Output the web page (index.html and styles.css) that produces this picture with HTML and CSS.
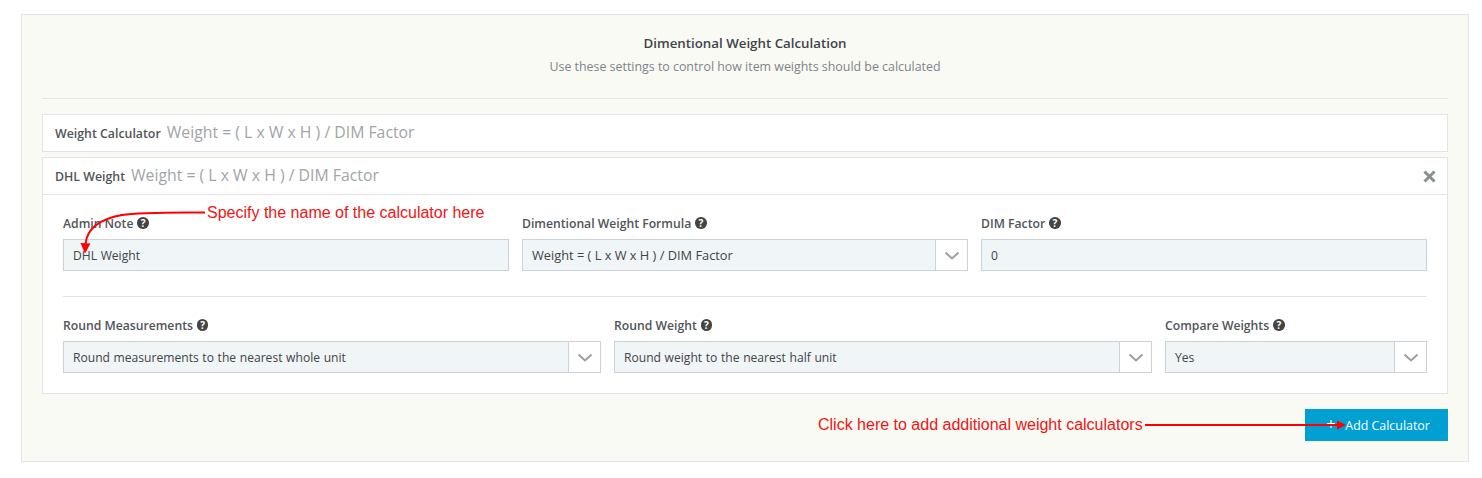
FILE: index.html
```html
<!DOCTYPE html>
<html lang="en">
<head>
  <meta charset="UTF-8">
  <title>Dimentional Weight Calculation</title>
  <link rel="stylesheet" href="styles.css">
</head>
<body>

<div class="panel">
  <div class="panel-head">
    <h3>Dimentional Weight Calculation</h3>
    <p>Use these settings to control how item weights should be calculated</p>
  </div>

  <!-- Collapsed calculator -->
  <div class="calc">
    <div class="calc-title">
      <strong>Weight Calculator</strong>
      <span>Weight = ( L x W x H ) / DIM Factor</span>
    </div>
  </div>

  <!-- Open calculator -->
  <div class="calc">
    <div class="calc-title calc-title-open">
      <strong>DHL Weight</strong>
      <span>Weight = ( L x W x H ) / DIM Factor</span>
      <svg class="close" width="13" height="13" viewBox="0 0 13 13"><path d="M1.500 1.500l10 10M11.500 1.500l-10 10"/></svg>
    </div>
    <div class="calc-body">
      <div class="row row-top">
        <div class="field">
          <label>Admin Note <i class="help">?</i></label>
          <div class="input">DHL Weight</div>
        </div>
        <div class="field">
          <label>Dimentional Weight Formula <i class="help">?</i></label>
          <div class="select">
            <div class="input input-formula">Weight = ( L x W x H ) / DIM Factor</div>
            <div class="arrow"><svg width="16" height="9" viewBox="0 0 16 9"><path d="M1.500 1.500L8 7.500l6.500-6"/></svg></div>
          </div>
        </div>
        <div class="field">
          <label>DIM Factor <i class="help">?</i></label>
          <div class="input">0</div>
        </div>
      </div>
      <div class="row row-bottom">
        <div class="field">
          <label>Round Measurements <i class="help">?</i></label>
          <div class="select">
            <div class="input">Round measurements to the nearest whole unit</div>
            <div class="arrow"><svg width="16" height="9" viewBox="0 0 16 9"><path d="M1.500 1.500L8 7.500l6.500-6"/></svg></div>
          </div>
        </div>
        <div class="field">
          <label>Round Weight <i class="help">?</i></label>
          <div class="select">
            <div class="input">Round weight to the nearest half unit</div>
            <div class="arrow"><svg width="16" height="9" viewBox="0 0 16 9"><path d="M1.500 1.500L8 7.500l6.500-6"/></svg></div>
          </div>
        </div>
        <div class="field">
          <label>Compare Weights <i class="help">?</i></label>
          <div class="select">
            <div class="input">Yes</div>
            <div class="arrow"><svg width="16" height="9" viewBox="0 0 16 9"><path d="M1.500 1.500L8 7.500l6.500-6"/></svg></div>
          </div>
        </div>
      </div>
    </div>
  </div>

  <div class="panel-foot">
    <button class="add-btn"><span class="plus">+</span>Add Calculator</button>
  </div>
</div>

<!-- Red notes drawn over the screenshot -->
<span class="note note-name">Specify the name of the calculator here</span>
<span class="note note-add">Click here to add additional weight calculators</span>
<svg class="marks" width="1482" height="478" viewBox="0 0 1482 478">
  <path class="mark-line" d="M205 212.500C170 212.500 140 212 122 215C100 219 87 228 85.500 244"/>
  <path class="mark-head" d="M80.500 243L90.500 243.500L85 253.500Z"/>
  <path class="mark-line" d="M1145 425H1338"/>
  <path class="mark-head" d="M1337 420.500L1346 425L1337 429.500Z"/>
</svg>

</body>
</html>
```

FILE: styles.css
```css
/* Page */
body {
  margin: 0;
  padding: 14px 13px 16px 21px;
  background: #fff;
  color: #444;
  font-family: "Open Sans", sans-serif;
  font-size: 12px;
}

/* Outer panel */
.panel {
  border: 1px solid #e1e5e6;
  background: #fafaf5;
  padding: 20px;
}

.panel-head {
  text-align: center;
  border-bottom: 1px solid #e1e7ea;
  height: 64px;
  margin-bottom: 15px;
}

.panel-head h3 {
  margin: -1px 0 0;
  font-size: 13.300px;
  line-height: 18px;
  font-weight: 600;
  color: #3f444a;
}

.panel-head p {
  margin: 6px 0 0;
  font-size: 12.400px;
  line-height: 18px;
  color: #7d848a;
}

/* Calculator boxes */
.calc {
  border: 1px solid #e1e5e6;
  background: #fff;
  margin-bottom: 5px;
}

.calc-title {
  height: 36px;
  display: flex;
  align-items: center;
  padding: 0 12px;
  gap: 6px;
}

.calc-title strong {
  font-size: 12.350px;
  font-weight: 600;
  color: #50555a;
}

.calc-title span {
  font-size: 15.800px;
  line-height: 18px;
  margin-top: -2px;
  color: #a0a5a8;
}

.calc-title-open {
  border-bottom: 1px solid #e1e5e6;
}

.close {
  margin-left: auto;
  margin-right: -1px;
  fill: none;
  stroke: #8a8f92;
  stroke-width: 3;
}

.calc-body {
  padding: 19px 20px 20px;
}

/* Form rows */
.row {
  display: grid;
  gap: 13px;
}

.row-top {
  grid-template-columns: 1fr 1fr 1fr;
  padding-bottom: 25px;
  border-bottom: 1px solid #e1e5e6;
  margin-bottom: 19px;
}

.row-bottom {
  grid-template-columns: 1fr 1fr 262px;
}

.field label {
  display: flex;
  align-items: center;
  gap: 4px;
  height: 18px;
  margin-bottom: 7px;
  font-size: 12.200px;
  font-weight: 600;
  color: #50555a;
}

.help {
  display: inline-block;
  width: 11.500px;
  height: 11.500px;
  border-radius: 50%;
  background: #444;
  color: #fff;
  font-size: 10px;
  font-style: normal;
  font-weight: 700;
  line-height: 12px;
  text-align: center;
}

.input {
  box-sizing: border-box;
  height: 32px;
  padding: 0 9px;
  border: 1px solid #ccd2d6;
  background: #f0f5f8;
  font-size: 12.100px;
  line-height: 32px;
  word-spacing: 0.500px;
  color: #444;
  flex: 1;
}

.input-formula {
  font-size: 12.800px;
  line-height: 30px;
  word-spacing: 0;
}

.select {
  display: flex;
}

.arrow {
  box-sizing: border-box;
  width: 32px;
  height: 32px;
  border: 1px solid #ccd2d6;
  border-left: none;
  background: #fff;
  display: flex;
  align-items: center;
  justify-content: center;
}

.arrow svg {
  fill: none;
  stroke: #9a9fa2;
  stroke-width: 2;
}

/* Footer */
.panel-foot {
  display: flex;
  justify-content: flex-end;
  padding-top: 10px;
}

.add-btn {
  width: 143px;
  height: 32px;
  border: none;
  padding: 0 0 0 3px;
  background: #00a0d2;
  color: #fff;
  font-family: "Open Sans", sans-serif;
  font-size: 12.400px;
}

.plus {
  font-size: 16px;
  line-height: 12px;
  margin-right: 10px;
}

/* Annotations */
.note {
  position: absolute;
  color: #f01414;
  font-family: "Liberation Sans", sans-serif;
  font-size: 16px;
  line-height: 18px;
  white-space: nowrap;
}

.note-name {
  left: 207px;
  top: 204px;
}

.note-add {
  left: 818px;
  top: 416px;
}

.marks {
  position: absolute;
  left: 0;
  top: 0;
  pointer-events: none;
}

.mark-line {
  fill: none;
  stroke: #f00;
  stroke-width: 2;
}

.mark-head {
  fill: #f00;
}
```
